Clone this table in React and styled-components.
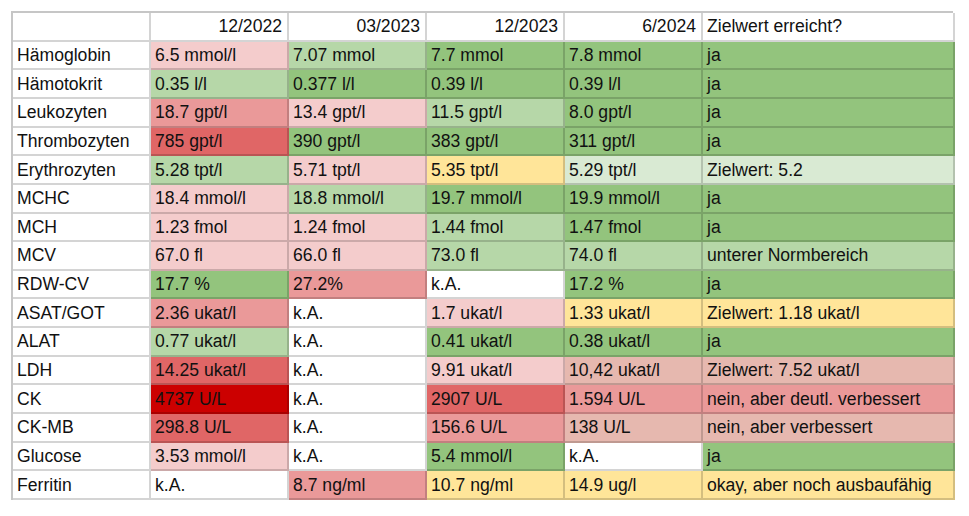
import React from 'react'
import styled, { createGlobalStyle } from "styled-components";

const GlobalStyle = createGlobalStyle`
  body {
    margin: 0;
    background: #ffffff;
    font-family: "Liberation Sans", Arial, sans-serif;
  }
`;

// fill colours as used in the spreadsheet
const fills = {
    r1: "#f4cccc",
    r2: "#ea9999",
    r3: "#e06666",
    r4: "#cc0000",
    rb: "#e6b8af",
    g1: "#d9ead3",
    g2: "#b6d7a8",
    g3: "#93c47d",
    y: "#ffe599",
    w: "#ffffff",
};

const headers = ["", "12/2022", "03/2023", "12/2023", "6/2024", "Zielwert erreicht?"];

const rows = [
    ["Hämoglobin", ["6.5 mmol/l", "r1"], ["7.07 mmol", "g2"], ["7.7 mmol", "g3"], ["7.8 mmol", "g3"], ["ja", "g3"]],
    ["Hämotokrit", ["0.35 l/l", "g2"], ["0.377 l/l", "g3"], ["0.39 l/l", "g3"], ["0.39 l/l", "g3"], ["ja", "g3"]],
    ["Leukozyten", ["18.7 gpt/l", "r2"], ["13.4 gpt/l", "r1"], ["11.5 gpt/l", "g2"], ["8.0 gpt/l", "g3"], ["ja", "g3"]],
    ["Thrombozyten", ["785 gpt/l", "r3"], ["390 gpt/l", "g3"], ["383 gpt/l", "g3"], ["311 gpt/l", "g3"], ["ja", "g3"]],
    ["Erythrozyten", ["5.28 tpt/l", "g2"], ["5.71 tpt/l", "r1"], ["5.35 tpt/l", "y"], ["5.29 tpt/l", "g1"], ["Zielwert: 5.2", "g1"]],
    ["MCHC", ["18.4 mmol/l", "r1"], ["18.8 mmol/l", "g2"], ["19.7 mmol/l", "g3"], ["19.9 mmol/l", "g3"], ["ja", "g3"]],
    ["MCH", ["1.23 fmol", "r1"], ["1.24 fmol", "r1"], ["1.44 fmol", "g2"], ["1.47 fmol", "g3"], ["ja", "g3"]],
    ["MCV", ["67.0 fl", "r1"], ["66.0 fl", "r1"], ["73.0 fl", "g2"], ["74.0 fl", "g2"], ["unterer Normbereich", "g2"]],
    ["RDW-CV", ["17.7 %", "g3"], ["27.2%", "r2"], ["k.A.", "w"], ["17.2 %", "g3"], ["ja", "g3"]],
    ["ASAT/GOT", ["2.36 ukat/l", "r2"], ["k.A.", "w"], ["1.7 ukat/l", "r1"], ["1.33 ukat/l", "y"], ["Zielwert: 1.18 ukat/l", "y"]],
    ["ALAT", ["0.77 ukat/l", "g2"], ["k.A.", "w"], ["0.41 ukat/l", "g3"], ["0.38 ukat/l", "g3"], ["ja", "g3"]],
    ["LDH", ["14.25 ukat/l", "r3"], ["k.A.", "w"], ["9.91 ukat/l", "r1"], ["10,42 ukat/l", "rb"], ["Zielwert: 7.52 ukat/l", "rb"]],
    ["CK", ["4737 U/L", "r4"], ["k.A.", "w"], ["2907 U/L", "r3"], ["1.594 U/L", "r2"], ["nein, aber deutl. verbessert", "r2"]],
    ["CK-MB", ["298.8 U/L", "r3"], ["k.A.", "w"], ["156.6 U/L", "r2"], ["138 U/L", "rb"], ["nein, aber verbessert", "rb"]],
    ["Glucose", ["3.53 mmol/l", "r1"], ["k.A.", "w"], ["5.4 mmol/l", "g3"], ["k.A.", "w"], ["ja", "g3"]],
    ["Ferritin", ["k.A.", "w"], ["8.7 ng/ml", "r2"], ["10.7 ng/ml", "y"], ["14.9 ug/l", "y"], ["okay, aber noch ausbaufähig", "y"]],
];

const Page = styled.div`
    padding: 11px 0 0 11px;
`;

const Sheet = styled.div`
    display: grid;
    grid-template-columns: repeat(5, 138px) 252px;
    grid-template-rows: repeat(17, 1fr);
    width: 942px;
    height: 489px;
    box-sizing: border-box;
    border-top: 2px solid #c6c6c6;
    border-left: 2px solid #c6c6c6;
`;

const Cell = styled.div`
    display: flex;
    align-items: center;
    justify-content: ${props => props.$right ? "flex-end" : "flex-start"};
    box-sizing: border-box;
    padding: 1px 5px 0 4px;
    border-right: 2px solid rgba(0, 0, 0, 0.17);
    border-bottom: 2px solid rgba(0, 0, 0, 0.17);
    background-color: ${props => props.$fill || "#ffffff"};
    color: #111;
    font-size: 17.6px;
    white-space: nowrap;
    overflow: hidden;
`;

function App() {
    return (
        <Page>
            <GlobalStyle />
            <Sheet>
                {headers.map((h, i) => (
                    <Cell key={"h" + i} $right={i > 0 && i < 5}>{h}</Cell>
                ))}
                {rows.map(([name, ...values]) => (
                    <React.Fragment key={name}>
                        <Cell>{name}</Cell>
                        {values.map(([text, fill], i) => (
                            <Cell key={i} $fill={fills[fill]}>{text}</Cell>
                        ))}
                    </React.Fragment>
                ))}
            </Sheet>
        </Page>
    )
}

export default App;
